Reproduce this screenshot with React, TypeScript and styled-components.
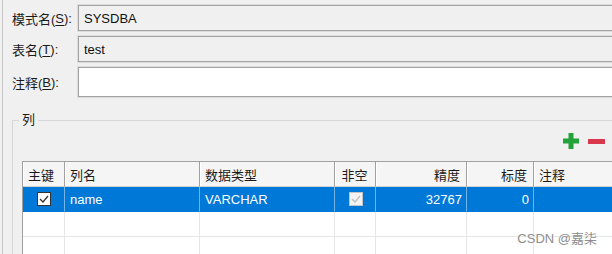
import { FC, ReactNode } from "react";
import styled, { createGlobalStyle } from "styled-components";

const GlobalStyle = createGlobalStyle`
  body {
    margin: 0;
    background: #f0f0f0;
    font-family: "Liberation Sans", "Noto Sans CJK SC", sans-serif;
    font-size: 13px;
    color: #1b1b1b;
  }
`;

const Screen = styled.div`
  position: relative;
  width: 612px;
  height: 254px;
  overflow: hidden;
  background: #f0f0f0;
`;

const Panel = styled.div`
  margin-left: 2px;
  width: 640px;
  height: 100%;
  box-sizing: border-box;
  border-left: 1px solid #c6c6c6;
  padding: 5px 0 0 9px;
  display: flex;
  flex-direction: column;
`;

const Form = styled.div`
  display: grid;
  grid-template-columns: 66px 1fr;
  grid-template-rows: 26px 26px 30px;
  row-gap: 5px;
  align-items: stretch;
`;

const Label = styled.label`
  display: flex;
  align-items: center;
  white-space: nowrap;
  color: #1b1b1b;

  u {
    text-decoration-thickness: 1px;
    text-underline-offset: 2px;
  }
`;

const Field = styled.input<{ $editable?: boolean }>`
  margin: 0;
  height: 100%;
  box-sizing: border-box;
  border: 1px solid #a3a3a3;
  box-shadow: 0 0 0 1px #dcdcdc;
  border-radius: 0;
  outline: none;
  padding: 0 5px;
  background: ${(p) => (p.$editable ? "#ffffff" : "#f0f0f0")};
  font-family: "Liberation Sans", "Noto Sans CJK SC", sans-serif;
  font-size: 13px;
  color: #111;
`;

const Group = styled.fieldset`
  margin: 15px 0 0 0;
  padding: 0 0 0 9px;
  border: 1px solid #d6d6d6;
  border-right: none;
  border-bottom: none;
  min-width: 0;
  flex: 1;
`;

const Legend = styled.legend`
  padding: 0 3px;
  margin-left: -3px;
  line-height: 16px;
  font-size: 13px;
  color: #1b1b1b;
`;

const Toolbar = styled.div`
  width: 583px;
  height: 33px;
  box-sizing: border-box;
  padding-top: 5px;
  display: flex;
  justify-content: flex-end;
  align-items: flex-start;
  gap: 9px;
`;

const ToolButton = styled.button`
  margin: 0;
  padding: 0;
  border: none;
  background: none;
  display: flex;
  cursor: pointer;
`;

const Table = styled.div`
  border-top: 1px solid #a0a0a0;
  border-left: 1px solid #a0a0a0;
  background: #fff;
  height: 200px;
`;

const Row = styled.div<{ $selected?: boolean }>`
  display: grid;
  grid-template-columns: 42px 135px 135px 41px 91px 67px 120px;
  height: 25px;
  background: ${(p) => (p.$selected ? "#0078d7" : "#ffffff")};
  color: ${(p) => (p.$selected ? "#ffffff" : "#1b1b1b")};
`;

type Align = "left" | "center" | "right";

const justify = (a: Align) =>
  a === "left" ? "flex-start" : a === "right" ? "flex-end" : "center";

const HeadCell = styled.div<{ $align: Align }>`
  box-sizing: border-box;
  border-right: 1px solid #a0a0a0;
  border-bottom: 1px solid #d2d2d2;
  box-shadow: inset 1px 0 #ffffff;
  background: #f5f5f5;
  padding: 0 6px 0 5px;
  display: flex;
  align-items: center;
  justify-content: ${(p) => justify(p.$align)};
  white-space: nowrap;
`;

const Cell = styled.div<{ $align: Align; $selected?: boolean }>`
  box-sizing: border-box;
  border-right: 1px solid
    ${(p) => (p.$selected ? "rgba(255,255,255,0.45)" : "#e6e6e6")};
  border-bottom: 1px solid ${(p) => (p.$selected ? "#0078d7" : "#e6e6e6")};
  padding: 0 4px 0 5px;
  display: flex;
  align-items: center;
  justify-content: ${(p) => justify(p.$align)};
  white-space: nowrap;
`;

const Box = styled.span<{ $disabled?: boolean }>`
  width: 14px;
  height: 14px;
  box-sizing: border-box;
  border: 1px solid ${(p) => (p.$disabled ? "#c4c4c4" : "#333333")};
  background: ${(p) => (p.$disabled ? "#f3f3f3" : "#ffffff")};
  display: inline-flex;
  align-items: center;
  justify-content: center;
`;

const Watermark = styled.div`
  position: absolute;
  right: 15px;
  bottom: 7px;
  line-height: 16px;
  font-size: 13px;
  color: #8e8e8e;
  text-shadow: 0 0 2px rgba(255, 255, 255, 0.9);
`;

const CheckBox: FC<{ checked?: boolean; disabled?: boolean }> = ({
  checked,
  disabled,
}) => (
  <Box $disabled={disabled}>
    {checked && (
      <svg width="10" height="10" viewBox="0 0 10 10">
        <polyline
          points="1,5 4,8 9,2"
          fill="none"
          stroke={disabled ? "#bdbdbd" : "#333"}
          strokeWidth="1.3"
        />
      </svg>
    )}
  </Box>
);

const PlusIcon = () => (
  <svg width="16" height="16" viewBox="0 0 16 16">
    <rect x="0" y="5.5" width="16" height="5" fill="#23a23a" />
    <rect x="5.5" y="0" width="5" height="16" fill="#23a23a" />
  </svg>
);

const MinusIcon = () => (
  <svg width="17" height="16" viewBox="0 0 17 16">
    <rect x="0" y="6" width="17" height="5" rx="0.5" fill="#d9384c" />
  </svg>
);

const columns: { title: string; align: Align }[] = [
  { title: "主键", align: "left" },
  { title: "列名", align: "left" },
  { title: "数据类型", align: "left" },
  { title: "非空", align: "center" },
  { title: "精度", align: "right" },
  { title: "标度", align: "right" },
  { title: "注释", align: "left" },
];

const FormRow: FC<{ label: ReactNode; value: string; editable?: boolean }> = ({
  label,
  value,
  editable,
}) => (
  <>
    <Label>{label}</Label>
    <Field readOnly value={value} $editable={editable} />
  </>
);

const App: FC = () => {
  const rows: ReactNode[][] = [
    [
      <CheckBox checked />,
      "name",
      "VARCHAR",
      <CheckBox checked disabled />,
      "32767",
      "0",
      "",
    ],
    ["", "", "", "", "", "", ""],
    ["", "", "", "", "", "", ""],
  ];

  return (
    <Screen>
      <GlobalStyle />
      <Panel>
        <Form>
          <FormRow
            label={
              <>
                模式名(<u>S</u>):
              </>
            }
            value="SYSDBA"
          />
          <FormRow
            label={
              <>
                表名(<u>T</u>):
              </>
            }
            value="test"
          />
          <FormRow
            label={
              <>
                注释(<u>B</u>):
              </>
            }
            value=""
            editable
          />
        </Form>

        <Group>
          <Legend>列</Legend>
          <Toolbar>
            <ToolButton title="添加">
              <PlusIcon />
            </ToolButton>
            <ToolButton title="删除">
              <MinusIcon />
            </ToolButton>
          </Toolbar>
          <Table>
            <Row>
              {columns.map((c) => (
                <HeadCell key={c.title} $align={c.align}>
                  {c.title}
                </HeadCell>
              ))}
            </Row>
            {rows.map((r, i) => (
              <Row key={i} $selected={i === 0}>
                {r.map((v, j) => (
                  <Cell
                    key={j}
                    $selected={i === 0}
                    $align={j === 0 || j === 3 ? "center" : columns[j].align}
                  >
                    {v}
                  </Cell>
                ))}
              </Row>
            ))}
          </Table>
        </Group>
      </Panel>
      <Watermark>CSDN @嘉柒</Watermark>
    </Screen>
  );
};

export default App;
